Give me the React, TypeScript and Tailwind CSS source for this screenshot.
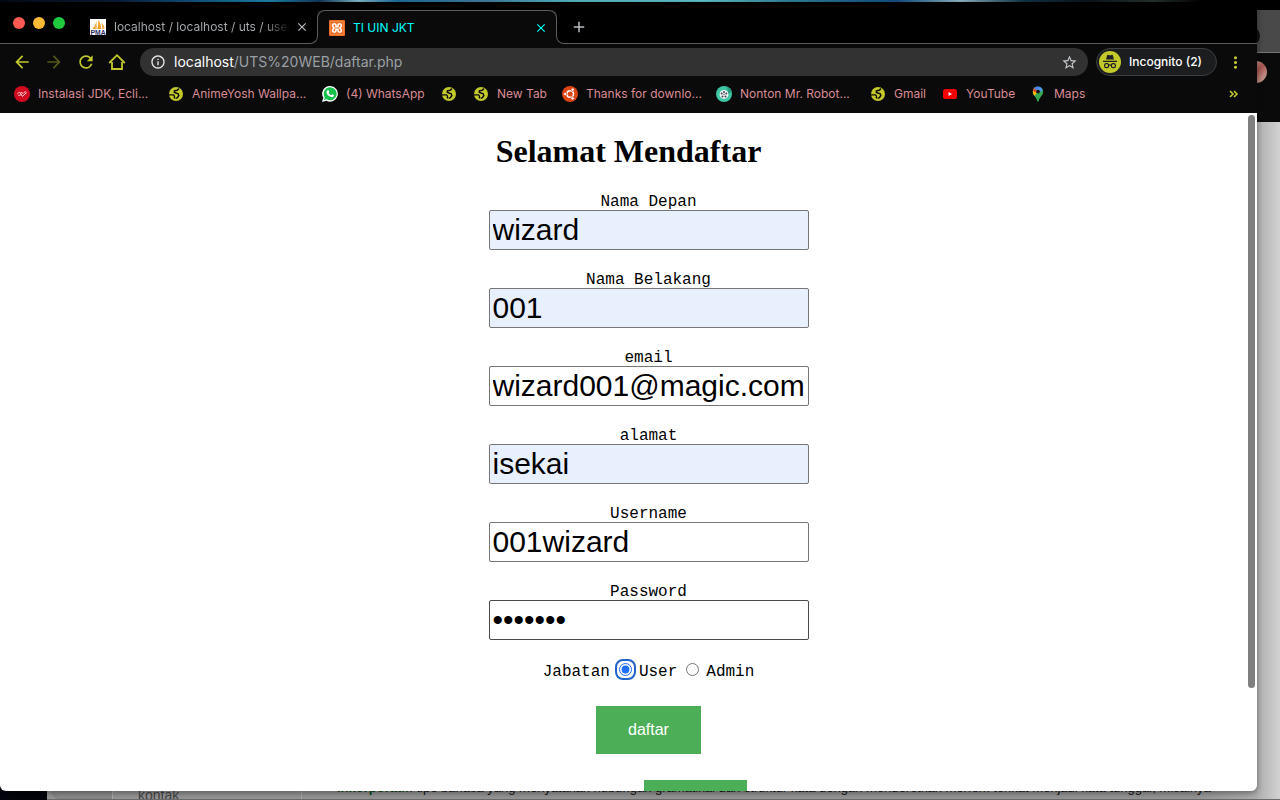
import type { ReactNode } from "react";
import {
  MdAdd,
  MdArrowBack,
  MdArrowForward,
  MdClose,
  MdInfoOutline,
  MdMoreVert,
  MdRefresh,
  MdStarBorder,
} from "react-icons/md";

function HomeIcon() {
  return (
    <svg width="18" height="18" viewBox="0 0 18 18" fill="none" stroke="currentColor" strokeWidth="1.800">
      <path d="M1.200 10 9 2.200l7.800 7.800" />
      <path d="M4 9v7h10V9" />
    </svg>
  );
}

function XamppIcon() {
  return (
    <svg width="16" height="16" viewBox="0 0 16 16" className="shrink-0">
      <rect width="16" height="16" rx="1" fill="#ee6d22" />
      <rect x="1.500" y="1.500" width="13" height="13" rx="1" fill="none" stroke="#f49a63" strokeWidth=".6" />
      <g fill="none" stroke="#fff" strokeWidth="1.600">
        <path d="M7 6.700V5.500a1.700 1.700 0 0 0-3.400 0C3.600 6.500 4.400 7 5 8c-.6 1-1.400 1.500-1.400 2.500a1.700 1.700 0 0 0 3.400 0V9.300h2v1.200a1.700 1.700 0 0 0 3.400 0c0-1-.8-1.500-1.400-2.500.6-1 1.400-1.500 1.400-2.500a1.700 1.700 0 0 0-3.400 0v1.200z" />
      </g>
    </svg>
  );
}

function GlobeIcon() {
  return (
    <svg width="16" height="16" viewBox="0 0 16 16">
      <circle cx="8" cy="8" r="7" fill="#c3c92b" />
      <g fill="none" stroke="#0b0b0b">
        <path d="M11 2.600 9.200 4.200 6.400 4.800v1.600l3.800 1.400.6 1.800-1.400 2-1.800.6" strokeWidth="1.500" />
        <path d="M1 8.800h4.400l1 1.200v2.400" strokeWidth="1.300" />
      </g>
    </svg>
  );
}

function EclipseNoteIcon() {
  return (
    <svg width="16" height="16" viewBox="0 0 16 16">
      <circle cx="8" cy="8" r="8" fill="#d30b20" />
      <g fill="none" stroke="#ffd9dc" strokeWidth="1">
        <path d="M3.600 7.600c.8-1.600 2.600-1.200 3.200.2l1.600 2.600 4-3.600" />
        <path d="M6.200 7.200c1-1.200 2.400-.8 2.600.6M9.600 7.200c.4-1.400 2-1.600 2.800-.8M4 8.800c.8.800 2 .8 3.200-.4" />
      </g>
    </svg>
  );
}

function WhatsAppIcon() {
  return (
    <svg width="16" height="16" viewBox="0 0 16 16">
      <path d="M8.200 0a7.800 7.800 0 1 1-3.800 14.700L0 16l1.300-4.200A7.800 7.800 0 0 1 8.200 0z" fill="#fff" />
      <path d="M8.200 1.300a6.500 6.500 0 1 1-3.500 12l-2.800.8.9-2.700a6.500 6.500 0 0 1 5.400-10.100z" fill="#15c14b" />
      <path
        d="M5.600 4.200c.4-.3.8-.2 1 .2l.6 1.400c.1.3-.5.9-.6 1.100.5 1 1.300 1.800 2.500 2.300.3 0 .8-.9 1-.9l1.600.8c.4.2.2 1-.1 1.400-.7.800-1.900.800-3.100.300C6.500 10 5 8.500 4.600 6.700c-.2-1 .4-2.100 1-2.500z"
        fill="#fff"
      />
    </svg>
  );
}

function UbuntuIcon() {
  return (
    <svg width="16" height="16" viewBox="0 0 16 16">
      <circle cx="8" cy="8" r="8" fill="#dd4414" />
      <circle cx="8.200" cy="8" r="3.300" fill="none" stroke="#fff" strokeWidth="1.500" />
      <g fill="#fff" stroke="#dd4414" strokeWidth=".7">
        <circle cx="3.200" cy="8" r="1.600" />
        <circle cx="10.600" cy="3.700" r="1.600" />
        <circle cx="10.600" cy="12.300" r="1.600" />
      </g>
    </svg>
  );
}

function ReelIcon() {
  return (
    <svg width="16" height="16" viewBox="0 0 16 16">
      <circle cx="8" cy="8" r="8" fill="#3fc6a5" />
      <path d="M11 .6A8 8 0 0 1 15.800 6L12 8z" fill="#2b9c83" />
      <circle cx="8" cy="8.400" r="4.400" fill="#f3f5f5" />
      <g fill="#38444b">
        <circle cx="8" cy="5.900" r="1" />
        <circle cx="10.300" cy="7.500" r="1" />
        <circle cx="9.500" cy="10.400" r="1" />
        <circle cx="6.500" cy="10.400" r="1" />
        <circle cx="5.700" cy="7.500" r="1" />
        <circle cx="8" cy="8.400" r=".6" />
      </g>
    </svg>
  );
}

function YouTubeIcon() {
  return (
    <svg width="16" height="16" viewBox="0 0 16 16">
      <rect x="1" y="3" width="14" height="10" rx="2.500" fill="#f60000" />
      <path d="M6.500 6v4l3.500-2z" fill="#fff" />
    </svg>
  );
}

function MapsIcon() {
  return (
    <svg width="16" height="16" viewBox="0 0 16 16">
      <path d="M8 .5A5.200 5.200 0 0 1 13.200 5.700c0 3.600-3.700 5.300-4.400 9.200-.2.800-1.400.8-1.600 0C6.500 11 2.800 9.300 2.800 5.700A5.200 5.200 0 0 1 8 .5z" fill="#34a853" />
      <path d="M2.800 5.700c0 1.700.8 2.900 1.700 4.100L9.800 3.500 6.400.8C4.300 1.400 2.800 3.300 2.800 5.700z" fill="#fbbc04" />
      <path d="M4 2.400 6.700 4.700 10 .9C7.800 0 5.300.7 4 2.400z" fill="#4285f4" />
      <path d="M4 2.400 6.700 4.700 5.500 6.300 2.900 5C3 4 3.400 3.100 4 2.400z" fill="#ea4335" />
      <path d="M10 .9 7 4.300l2.600 2.400 3-3.300A5.200 5.200 0 0 0 10 .9z" fill="#4f93f7" />
      <circle cx="8" cy="5.600" r="1.900" fill="#111" />
    </svg>
  );
}

function PmaIcon() {
  return (
    <svg width="16" height="16" viewBox="0 0 16 16" className="shrink-0">
      <rect width="16" height="16" fill="#fff" />
      <path d="M6.500 1.500 6.800 10H2.200C4.200 7.500 5.800 5 6.500 1.500z" fill="#f5b04c" />
      <path d="M8 1c2.500 2.500 3 5.500 3 9H7.500C8.300 7 8.500 4 8 1z" fill="#f39a1f" />
      <path d="M11.500 3.500c2 2 3 4 3 6.500h-2.500c.2-2.500 0-4.500-.5-6.500z" fill="#f5b04c" />
      <text x="8" y="15.700" textAnchor="middle" fontSize="6.800" fontWeight="700" fontFamily="Liberation Sans, sans-serif" fill="#2b2b66">
        PMA
      </text>
    </svg>
  );
}

function IncognitoIcon() {
  return (
    <svg width="22" height="22" viewBox="0 0 22 22" className="shrink-0">
      <circle cx="11" cy="11" r="11" fill="#c3c92b" />
      <path d="M8.200 4.200c.3-.6.7-.5 1.200-.3 1 .4 2.200.4 3.200 0 .5-.2.900-.3 1.200.3L15 8.600H7z" fill="#202124" />
      <path d="M4 10.300h14" stroke="#202124" strokeWidth="1.200" />
      <g fill="none" stroke="#202124" strokeWidth="1.200">
        <rect x="5.600" y="12.600" width="4" height="4" rx="1.600" />
        <rect x="12.400" y="12.600" width="4" height="4" rx="1.600" />
        <path d="M9.600 14.300q1.400-.8 2.800 0" />
      </g>
    </svg>
  );
}

type Bookmark = { label: string; icon: ReactNode; width: string };

const bookmarks: Bookmark[] = [
  { label: "Instalasi JDK, Ecli...", icon: <EclipseNoteIcon />, width: "ml-2 w-[114px]" },
  { label: "AnimeYosh Wallpa...", icon: <GlobeIcon />, width: "ml-2 w-[114px]" },
  { label: "(4) WhatsApp", icon: <WhatsAppIcon />, width: "ml-2 w-[79px]" },
  { label: "", icon: <GlobeIcon />, width: "" },
  { label: "New Tab", icon: <GlobeIcon />, width: "ml-2 w-[49px]" },
  { label: "Thanks for downlo...", icon: <UbuntuIcon />, width: "ml-2 w-[114px]" },
  { label: "Nonton Mr. Robot...", icon: <ReelIcon />, width: "ml-2 w-[114px]" },
  { label: "Gmail", icon: <GlobeIcon />, width: "ml-2 w-8" },
  { label: "YouTube", icon: <YouTubeIcon />, width: "ml-2 w-12" },
  { label: "Maps", icon: <MapsIcon />, width: "ml-2 w-8" },
];

function TabStrip() {
  return (
    <div className="flex h-[42px] bg-black">
      <div className="flex w-[317px] items-center border-b border-[#5c5c5c] pt-2">
        <div className="flex gap-2 pb-2 pl-[13px]">
          <span className="size-3 rounded-full bg-[#ff5a52]" />
          <span className="size-3 rounded-full bg-[#fdbb35]" />
          <span className="size-3 rounded-full bg-[#1fcb3d]" />
        </div>
        <div className="flex min-w-0 flex-1 items-center pl-[25px]">
          <PmaIcon />
          <span className="ml-2 w-[176px] overflow-hidden bg-linear-to-r from-[#a9adb0] from-85% to-transparent bg-clip-text text-xs whitespace-nowrap text-transparent">
            localhost / localhost / uts / user
          </span>
          <button aria-label="Close tab" className="ml-[5px] text-[#b9bcbf]">
            <MdClose size={14} />
          </button>
        </div>
      </div>
      <div className="relative mt-2 w-60 shrink-0 bg-[#0a0a0a]">
        <div className="flex h-[26px] items-center rounded-t-lg border-x border-t border-[#5c5c5c] pl-[11px]">
          <div className="flex flex-1 items-center pt-2">
            <XamppIcon />
            <span className="ml-2 flex-1 text-xs text-[#00ffff]">TI UIN JKT</span>
            <button aria-label="Close tab" className="mr-2 text-[#00ffff]">
              <MdClose size={14} />
            </button>
          </div>
        </div>
        <span className="absolute bottom-0 -left-2 size-[9px] bg-[#0a0a0a]">
          <span className="block size-full rounded-br-lg border-r border-b border-[#5c5c5c] bg-black" />
        </span>
        <span className="absolute -right-2 bottom-0 size-[9px] bg-[#0a0a0a]">
          <span className="block size-full rounded-bl-lg border-b border-l border-[#5c5c5c] bg-black" />
        </span>
      </div>
      <div className="flex flex-1 items-center border-b border-[#5c5c5c] pt-2 pl-[13px]">
        <button aria-label="New tab" className="text-[#b9bcbf]">
          <MdAdd size={18} />
        </button>
      </div>
    </div>
  );
}

function Toolbar() {
  return (
    <div className="flex h-9 items-center bg-[#0a0a0a] pt-1 pb-1 text-[#c3c92b]">
      <div className="flex w-[140px] shrink-0 items-center gap-3 pl-3">
        <button aria-label="Back"><MdArrowBack size={20} /></button>
        <button aria-label="Forward" className="text-[#56581a]"><MdArrowForward size={20} /></button>
        <button aria-label="Reload"><MdRefresh size={20} /></button>
        <button aria-label="Home"><HomeIcon /></button>
      </div>
      <div className="flex h-7 min-w-0 flex-1 items-center rounded-full bg-[#323232] px-[10px]">
        <MdInfoOutline size={16} className="text-[#e8eaed]" />
        <span className="ml-2 flex-1 text-sm text-[#9aa0a6]">
          <span className="text-white">localhost</span>/UTS%20WEB/daftar.php
        </span>
        <button aria-label="Bookmark this page" className="text-[#c4c7ca]">
          <MdStarBorder size={17} />
        </button>
      </div>
      <button className="ml-2 flex h-7 w-[121px] shrink-0 items-center gap-2 rounded-full border border-[#3c4043] bg-[#1b1d1f] pl-[2px] text-xs font-medium whitespace-nowrap text-white">
        <IncognitoIcon />
        Incognito (2)
      </button>
      <button aria-label="Menu" className="mr-3 ml-[9px]"><MdMoreVert size={19} /></button>
    </div>
  );
}

function BookmarksBar() {
  return (
    <nav className="flex h-[33px] items-center gap-4 bg-[#0a0a0a] pr-[18px] pb-1.5 pl-[14px] text-xs text-[#d98a94]">
      {bookmarks.map((b, i) => (
        <a key={i} href="#" aria-label={b.label || "Bookmark"} className="flex shrink-0 items-center whitespace-nowrap">
          {b.icon}
          {b.label && <span className={b.width}>{b.label}</span>}
        </a>
      ))}
      <button aria-label="More bookmarks" className="ml-auto text-[#c3c92b]">
        <svg width="10" height="8" viewBox="0 0 10 8" fill="none" stroke="currentColor" strokeWidth="1.600">
          <path d="M1 1l3 3-3 3M5 1l3 3-3 3" />
        </svg>
      </button>
    </nav>
  );
}

const fields = [
  { id: "depan", label: "Nama Depan", value: "wizard", type: "text", look: "border-[#767676] bg-[#e8f0fe]" },
  { id: "belakang", label: "Nama Belakang", value: "001", type: "text", look: "border-[#767676] bg-[#e8f0fe]" },
  { id: "email", label: "email", value: "wizard001@magic.com", type: "email", look: "border-[#767676] bg-white" },
  { id: "alamat", label: "alamat", value: "isekai", type: "text", look: "border-[#767676] bg-[#e8f0fe]" },
  { id: "username", label: "Username", value: "001wizard", type: "text", look: "border-[#767676] bg-white" },
  { id: "password", label: "Password", value: "rahasia", type: "password", look: "border-[#4a4a4a] bg-white" },
];

function RegistrationPage() {
  return (
    <main className="relative min-h-0 flex-1 overflow-hidden bg-white text-black">
      <h1 className="pt-5 text-center font-['Liberation_Serif',serif] text-[32px] leading-9 font-bold">
        Selamat Mendaftar
      </h1>
      <form
        className="mt-[23px] flex flex-col items-center gap-5 pl-10 font-['Liberation_Mono',monospace] text-base"
        onSubmit={(e) => e.preventDefault()}
      >
        {fields.map((f) => (
          <div key={f.id} className="flex flex-col items-center">
            <label htmlFor={f.id} className="h-[18px] leading-5">{f.label}</label>
            <input
              id={f.id}
              type={f.type}
              defaultValue={f.value}
              className={`h-10 w-80 rounded-xs border pl-[3px] font-['Liberation_Sans',sans-serif] text-[30px] leading-9 ${f.look}`}
            />
          </div>
        ))}
        <div className="flex h-[22px] items-start leading-6">
          <span className="mr-[7px]">Jabatan</span>
          <span className="mt-px flex size-[17px] items-center justify-center rounded-md outline-2 outline-[#1f62c9]">
            <input id="user" type="radio" name="jabatan" defaultChecked className="size-[13px] accent-[#1f6fff]" />
          </span>
          <label htmlFor="user" className="ml-[5px]">User</label>
          <input id="admin" type="radio" name="jabatan" className="mt-[3px] ml-[9px] size-[13px]" />
          <label htmlFor="admin" className="ml-[7px]">Admin</label>
        </div>
        <button
          type="submit"
          className="mt-1 h-12 bg-[#4caf57] px-8 font-['Liberation_Sans',sans-serif] text-white"
        >
          daftar
        </button>
        <div className="mt-[6px] pl-[94px]">
          <button type="button" className="h-12 bg-[#4caf57] px-8 font-['Liberation_Sans',sans-serif] text-white">
            Login
          </button>
        </div>
      </form>
      <div className="absolute top-0.5 right-0.5 h-[84.5%] w-[7px] rounded-full bg-[#7f7f7f]" />
    </main>
  );
}

function BackgroundWindow() {
  return (
    <div className="col-start-1 row-start-1 flex flex-col overflow-hidden pt-[10px]">
      <div className="flex h-[43px] shrink-0 justify-end border-b border-[#777] bg-[#494949]">
        <span className="mt-4 mr-5 size-5 rounded-full bg-[#101010]" />
      </div>
      <div className="flex h-[69px] shrink-0 justify-end bg-[#0a0a0a] pt-2">
        <span className="mr-[13px] size-[22px] rounded-full bg-linear-to-br from-[#d9c3bc] via-[#a4554f] to-[#c9b1a6]" />
      </div>
      <div className="flex flex-1 items-end">
        <div className="h-full w-[47px] shrink-0 bg-[#03040c]" />
        <div className="flex h-full min-w-0 flex-1 items-end overflow-hidden border-b border-[#6a6a6a] bg-linear-to-r from-[#959595] from-93% via-[#acacac] via-98% to-[#d2d2d2] font-['Liberation_Sans',sans-serif] text-[13px] leading-[14px] whitespace-nowrap text-[#111]">
          <div className="ml-[5px] h-6 w-[60px] rounded-bl-lg border-b border-l border-[#808080] bg-[#8b8b8b]" />
          <div className="h-8 w-[190px] border-x border-[#acacac] pt-5 pl-[25px] text-sm leading-4 text-[#444]">kontak</div>
          <div className="relative h-8 min-w-0 flex-1">
            <div className="absolute top-[14px] left-[35px]">
              <b className="text-[#0b4a14]">Inkorporatif</b>: tipe bahasa yang menyatakan hubungan gramatikal dan struktur kata
              dengan menderetkan morfem terikat menjadi kata tunggal, misalnya
            </div>
            <div className="absolute top-[30px] left-[20px]">bahasa Eskimo</div>
          </div>
        </div>
      </div>
    </div>
  );
}

export default function App() {
  return (
    <div className="grid h-screen grid-cols-[minmax(0,1fr)] grid-rows-[minmax(0,1fr)] overflow-hidden bg-black font-[Inter,sans-serif]">
      <BackgroundWindow />
      <div className="z-10 col-start-1 row-start-1 mr-[23px] mb-[9px] flex min-h-0 flex-col">
        <div className="-mr-[23px] h-0.5 shrink-0 bg-[linear-gradient(90deg,#040a16_0%,#0b1c38_9%,#0d4a74_14%,#1d83ad_21%,#123a5c_25%,#7fb9c9_28%,#1d6d9c_31%,#3f7fa0_38%,#56b8c6_45%,#62c0cb_55%,#2f7f98_62%,#0f4f86_70%,#8fb6c4_75%,#123349_80%,#0a141c_85%,#26332f_90%,#000_94%)]" />
        <div className="flex min-h-0 flex-1 flex-col overflow-hidden rounded-b-md shadow-[0_2px_6px_rgba(0,0,0,0.4)]">
          <TabStrip />
          <Toolbar />
          <BookmarksBar />
          <RegistrationPage />
        </div>
      </div>
    </div>
  );
}
